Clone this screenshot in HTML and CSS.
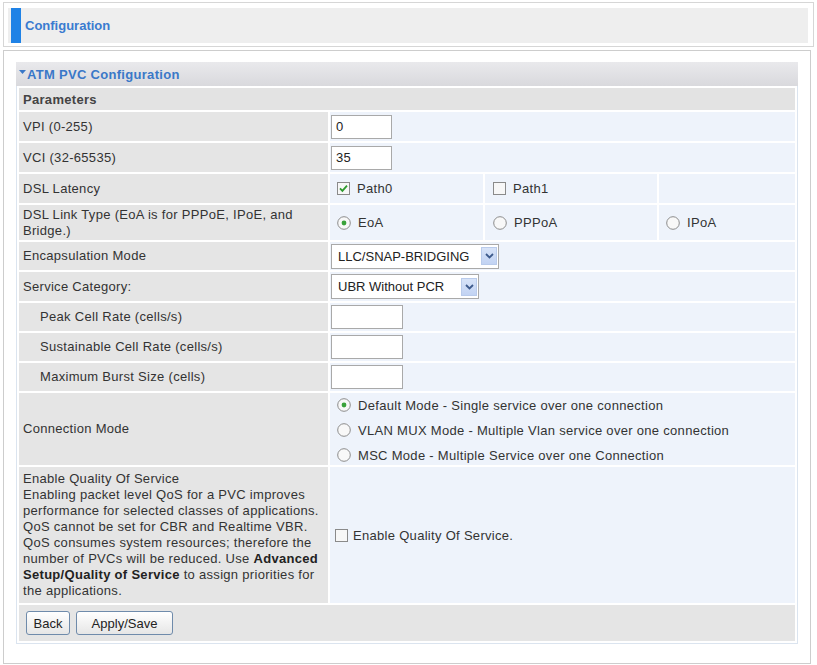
FILE: index.html
```html
<!DOCTYPE html>
<html>
<head>
<meta charset="utf-8">
<title>Configuration</title>
<link rel="stylesheet" href="styles.css">
</head>
<body>
<div class="page">
  <div class="topbox">
    <div class="titlebar">
      <span class="titlemark"></span>
      <span class="titletext">Configuration</span>
    </div>
  </div>
  <div class="mainbox">
    <div class="panel">
      <div class="panelhead">
        <svg class="tri" width="7" height="4" viewBox="0 0 7 4"><path d="M0 0 H7 L3.5 4 Z" fill="#3a78c8"/></svg>
        <span>ATM PVC Configuration</span>
      </div>
      <table class="cfg">
        <colgroup>
          <col class="c-label"><col class="c-v1"><col class="c-v2"><col class="c-v3">
        </colgroup>
        <tr class="r-param"><td colspan="4" class="param">Parameters</td></tr>
        <tr class="r29"><td class="lbl">VPI (0-255)</td><td colspan="3" class="val"><span class="inp w60">0</span></td></tr>
        <tr class="r29"><td class="lbl">VCI (32-65535)</td><td colspan="3" class="val"><span class="inp w60">35</span></td></tr>
        <tr class="r29"><td class="lbl">DSL Latency</td>
          <td class="val"><span class="opt o1"><svg width="13" height="13" viewBox="0 0 13 13"><rect x="0.5" y="0.5" width="12" height="12" fill="#f7f7f7" stroke="#8a8a8a"/><path d="M3 6.3 L5.4 8.8 L10 3.6" fill="none" stroke="#2e9a2e" stroke-width="1.8"/></svg>Path0</span></td>
          <td class="val"><span class="opt o2"><svg width="13" height="13" viewBox="0 0 13 13"><rect x="0.5" y="0.5" width="12" height="12" fill="#f7f7f7" stroke="#8a8a8a"/></svg>Path1</span></td>
          <td class="val"></td></tr>
        <tr class="r-link"><td class="lbl">DSL Link Type (EoA is for PPPoE, IPoE, and Bridge.)</td>
          <td class="val"><span class="opt o1"><svg width="14" height="14" viewBox="0 0 14 14"><circle cx="7" cy="7" r="6.3" fill="#f8f8f8" stroke="#8c8c8c"/><circle cx="7" cy="7" r="2.4" fill="#3aa23a"/></svg>EoA</span></td>
          <td class="val"><span class="opt o2"><svg width="14" height="14" viewBox="0 0 14 14"><circle cx="7" cy="7" r="6.3" fill="#f8f8f8" stroke="#8c8c8c"/></svg>PPPoA</span></td>
          <td class="val"><span class="opt o3"><svg width="14" height="14" viewBox="0 0 14 14"><circle cx="7" cy="7" r="6.3" fill="#f8f8f8" stroke="#8c8c8c"/></svg>IPoA</span></td></tr>
        <tr class="r28"><td class="lbl">Encapsulation Mode</td><td colspan="3" class="val"><span class="sel w166">LLC/SNAP-BRIDGING<span class="arrow"><svg width="9" height="6" viewBox="0 0 9 6"><path d="M1 1 L4.5 4.5 L8 1" fill="none" stroke="#3d5a8c" stroke-width="1.8"/></svg></span></span></td></tr>
        <tr class="r29"><td class="lbl">Service Category:</td><td colspan="3" class="val"><span class="sel w147">UBR Without PCR<span class="arrow"><svg width="9" height="6" viewBox="0 0 9 6"><path d="M1 1 L4.5 4.5 L8 1" fill="none" stroke="#3d5a8c" stroke-width="1.8"/></svg></span></span></td></tr>
        <tr class="r28"><td class="lbl ind">Peak Cell Rate (cells/s)</td><td colspan="3" class="val"><span class="inp w71"></span></td></tr>
        <tr class="r28"><td class="lbl ind">Sustainable Cell Rate (cells/s)</td><td colspan="3" class="val"><span class="inp w71"></span></td></tr>
        <tr class="r28"><td class="lbl ind">Maximum Burst Size (cells)</td><td colspan="3" class="val"><span class="inp w71"></span></td></tr>
        <tr class="r-conn"><td class="lbl">Connection Mode</td>
          <td colspan="3" class="val">
            <div class="modes">
              <span class="opt o1"><svg width="14" height="14" viewBox="0 0 14 14"><circle cx="7" cy="7" r="6.3" fill="#f8f8f8" stroke="#8c8c8c"/><circle cx="7" cy="7" r="2.4" fill="#3aa23a"/></svg>Default Mode - Single service over one connection</span>
              <span class="opt o1"><svg width="14" height="14" viewBox="0 0 14 14"><circle cx="7" cy="7" r="6.3" fill="#f8f8f8" stroke="#8c8c8c"/></svg>VLAN MUX Mode - Multiple Vlan service over one connection</span>
              <span class="opt o1"><svg width="14" height="14" viewBox="0 0 14 14"><circle cx="7" cy="7" r="6.3" fill="#f8f8f8" stroke="#8c8c8c"/></svg>MSC Mode - Multiple Service over one Connection</span>
            </div>
          </td></tr>
        <tr class="r-qos"><td class="lbl qos">Enable Quality Of Service<br>Enabling packet level QoS for a PVC improves performance for selected classes of applications. QoS cannot be set for CBR and Realtime VBR. QoS consumes system resources; therefore the number of PVCs will be reduced. Use <b>Advanced</b><br><b>Setup/Quality of Service</b> to assign priorities for the applications.</td>
          <td colspan="3" class="val"><span class="opt oq"><svg width="13" height="13" viewBox="0 0 13 13"><rect x="0.5" y="0.5" width="12" height="12" fill="#f7f7f7" stroke="#8a8a8a"/></svg>Enable Quality Of Service.</span></td></tr>
        <tr class="r-btn"><td colspan="4" class="btncell"><button class="btn b-back">Back</button><button class="btn b-apply">Apply/Save</button></td></tr>
      </table>
    </div>
  </div>
</div>
</body>
</html>
```
FILE: styles.css
```css
body {
  margin: 0;
  background: #ffffff;
  font-family: "Liberation Sans", Arial, sans-serif;
  font-size: 13px;
  letter-spacing: 0.3px;
  color: #333333;
}
.page {
  padding: 2px 0 0 3px;
}
.topbox {
  width: 811px;
  height: 45px;
  box-sizing: border-box;
  border: 1px solid #d6d6d6;
  padding: 5px 5px 3px 4px;
}
.titlebar {
  height: 35px;
  background: #eeeeee;
  display: flex;
  align-items: center;
}
.titlemark {
  width: 10px;
  height: 35px;
  margin-left: 3px;
  background: #1f82e6;
}
.titletext {
  margin-left: 4px;
  font-weight: bold;
  color: #3a7bd0;
  font-size: 13px;
  letter-spacing: 0;
}
.mainbox {
  margin-top: 3px;
  width: 808px;
  box-sizing: border-box;
  border: 1px solid #cdcdcd;
  padding: 11px 13px 19px 12px;
}
.panel {
  width: 782px;
  box-sizing: border-box;
  border: 1px solid #dbe4ef;
  border-top: none;
}
.panelhead {
  height: 24px;
  margin: 0 -1px;
  background: linear-gradient(#e9e9ec, #d9d9dd);
  display: flex;
  align-items: center;
  padding-left: 3px;
  font-weight: bold;
  color: #3a78c8;
}
.panelhead .tri {
  margin-right: 1px;
  margin-top: -4px;
}
.cfg {
  width: 780px;
  table-layout: fixed;
  border-collapse: separate;
  border-spacing: 2px;
}
.c-label { width: 309px; }
.c-v1 { width: 153px; }
.c-v2 { width: 172px; }
.c-v3 { width: 136px; }
.cfg td {
  padding: 0;
  vertical-align: middle;
}
.r-param { height: 22px; }
.r29 { height: 29px; }
.r28 { height: 28px; }
.r-link { height: 35px; }
.r-conn { height: 72px; }
.r-qos { height: 136px; }
.r-btn { height: 36px; }
.param {
  background: #e3e3e3;
  font-weight: bold;
  color: #444444;
  padding-left: 4px !important;
}
.lbl {
  background: #e5e5e5;
  padding: 0 2px 0 4px !important;
  line-height: 16px;
}
.lbl.ind {
  padding-left: 21px !important;
}
.lbl.qos {
  padding: 4px 1px 4px 4px !important;
  vertical-align: top;
}
.lbl b {
  color: #222222;
  line-height: 16px;
}
.val {
  background: #eef3fb;
  padding-left: 1px !important;
}
.inp {
  display: block;
  height: 24px;
  box-sizing: border-box;
  border: 1px solid #a9a9a9;
  background: #ffffff;
  padding-left: 4px;
  line-height: 22px;
  color: #222222;
}
.w60 { width: 61px; }
.w71 { width: 72px; }
.sel {
  display: flex;
  align-items: center;
  height: 25px;
  box-sizing: border-box;
  border: 1px solid #a9a9a9;
  background: #ffffff;
  padding-left: 6px;
  color: #222222;
  letter-spacing: 0;
}
.w166 { width: 168px; }
.w147 { width: 148px; }
.arrow {
  margin-left: auto;
  margin-right: 1px;
  width: 16px;
  height: 18px;
  box-sizing: border-box;
  background: linear-gradient(#d7e3f8, #c2d3f3);
  border: 1px solid #b9cbeb;
  display: flex;
  align-items: center;
  justify-content: center;
}
.opt {
  display: flex;
  align-items: center;
  color: #333333;
}
.opt svg {
  flex: none;
  margin-right: 7px;
}
.o1 { margin-left: 6px; }
.o2 { margin-left: 7px; }
.o3 { margin-left: 6px; }
.oq { margin-left: 4px; }
.oq svg { margin-right: 5px; }
.modes {
  display: flex;
  flex-direction: column;
  gap: 9px;
  padding-top: 2px;
}
.modes .opt {
  height: 16px;
}
.btncell {
  background: #e5e5e5;
  padding-left: 7px !important;
}
.btn {
  height: 24px;
  box-sizing: border-box;
  border: 1px solid #6f8bab;
  border-radius: 3px;
  background: linear-gradient(#ffffff, #e6e6e6);
  font-family: "Liberation Sans", Arial, sans-serif;
  font-size: 13px;
  color: #222222;
  vertical-align: middle;
}
.b-back {
  width: 44px;
  padding: 0;
}
.b-apply {
  width: 97px;
  padding: 0;
  margin-left: 6px;
}
```
